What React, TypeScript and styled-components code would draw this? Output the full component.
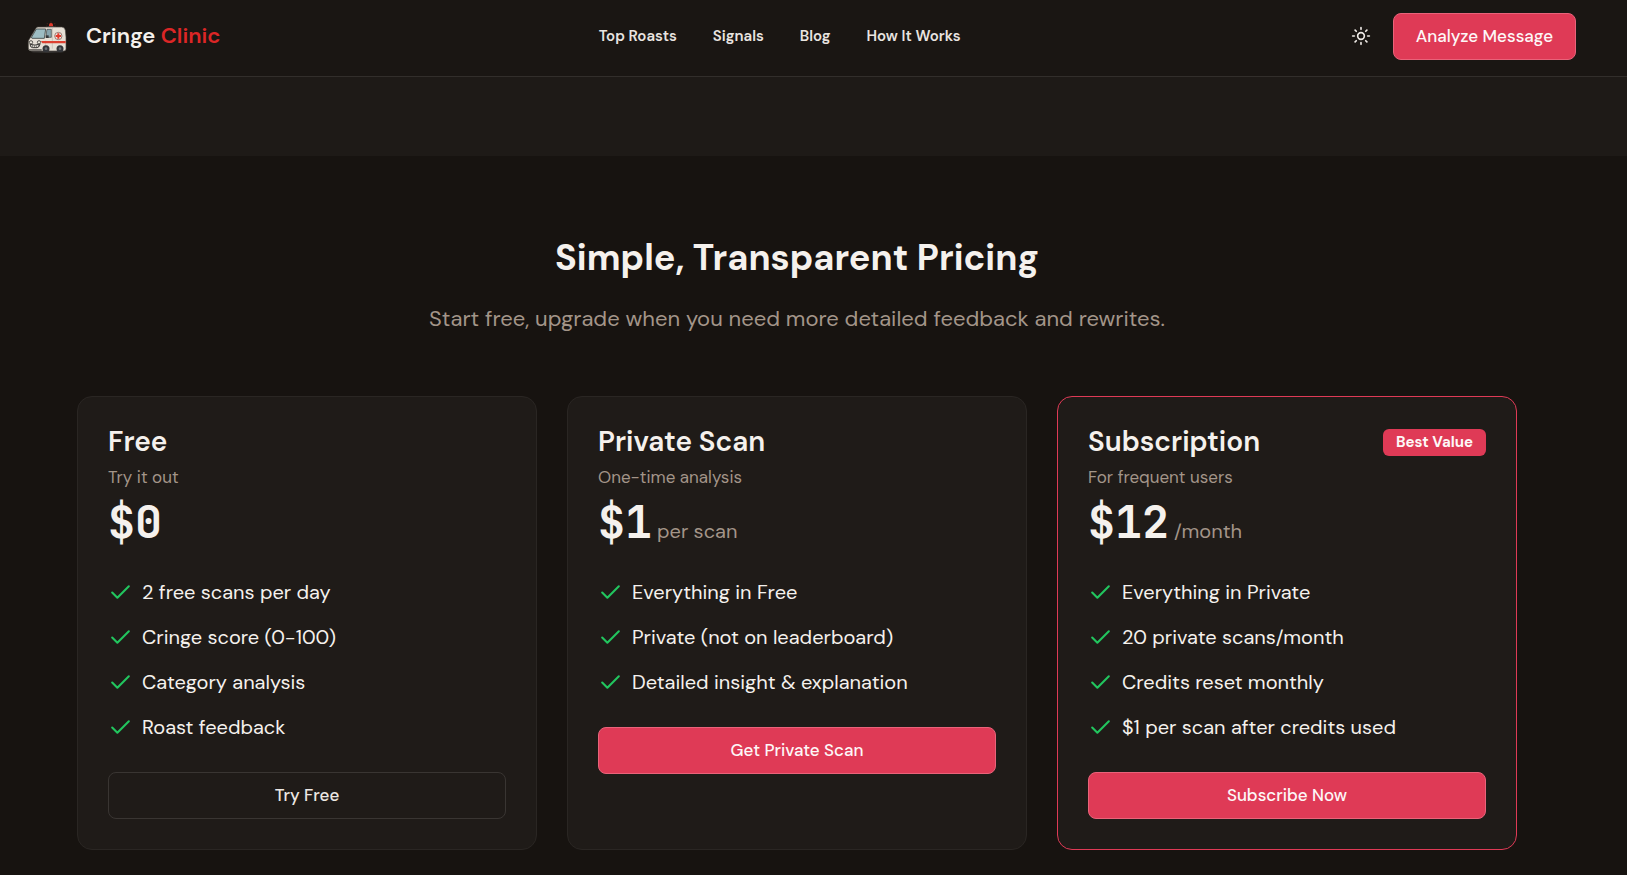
import React from "react";
import styled, { createGlobalStyle } from "styled-components";
import { Check, Sun } from "lucide-react";

const GlobalStyle = createGlobalStyle`
  *, *::before, *::after { box-sizing: border-box; }
  body {
    margin: 0;
    background: #171310;
    color: #f5f1ed;
    font-family: "DM Sans", "Open Sans", sans-serif;
    font-size: 20px;
    line-height: 30px;
  }
  h1, h2, h3, p, ul { margin: 0; padding: 0; }
  button { font: inherit; cursor: pointer; }
`;

const Header = styled.header`
  display: flex;
  align-items: center;
  justify-content: space-between;
  padding: 13px 51px 16px 27px;
  background: #1a1613;
  border-bottom: 1px solid #322e2b;
`;

const Brand = styled.a`
  display: flex;
  align-items: center;
  gap: 19px;
  padding-bottom: 1px;
  color: #f5f1ed;
  font-size: 22px;
  font-weight: 600;
  text-decoration: none;
`;

const BrandAccent = styled.span`
  color: #dc2626;
`;

const Nav = styled.nav`
  display: flex;
  gap: 36px;
  padding-bottom: 1px;
`;

const NavLink = styled.a`
  color: #e9e4e0;
  font-size: 15px;
  font-weight: 600;
  text-decoration: none;
`;

const Actions = styled.div`
  display: flex;
  align-items: center;
  gap: 10px;
`;

const IconButton = styled.button`
  display: grid;
  place-items: center;
  width: 44px;
  height: 44px;
  padding: 0 0 1px;
  border: 0;
  border-radius: 8px;
  background: transparent;
  color: #f0ebe7;
`;

const Button = styled.button<{ $outline?: boolean; $block?: boolean }>`
  width: ${(p) => (p.$block ? "100%" : "auto")};
  height: 47px;
  padding: 0 22px 2px;
  border: 1px solid ${(p) => (p.$outline ? "#393532" : "#e9637a")};
  border-radius: 8px;
  background: ${(p) => (p.$outline ? "transparent" : "#df3a56")};
  color: ${(p) => (p.$outline ? "#ece7e3" : "#fdf7f7")};
  font-size: 17px;
  font-weight: 500;
`;

const Band = styled.div`
  height: 79px;
  background: #1e1a17;
`;

const Pricing = styled.section`
  padding: 79px 33px 24px 0;
`;

const Container = styled.div`
  max-width: 1440px;
  margin: 0 auto;
`;

const Intro = styled.div`
  margin-bottom: 60px;
  text-align: center;
`;

const Title = styled.h2`
  margin-bottom: 21px;
  font-size: 36px;
  font-weight: 700;
  line-height: 46px;
`;

const Subtitle = styled.p`
  color: #a39589;
  font-size: 22px;
  line-height: 34px;
`;

const Plans = styled.div`
  display: grid;
  grid-template-columns: repeat(3, 1fr);
  gap: 30px;
`;

const Card = styled.article<{ $featured?: boolean }>`
  padding: 30px;
  border: 1px solid ${(p) => (p.$featured ? "#df3a56" : "#2a2623")};
  border-radius: 15px;
  background: #1f1b18;
`;

const CardHead = styled.div`
  display: flex;
  align-items: center;
  justify-content: space-between;
  height: 30px;
  margin-bottom: 8px;
`;

const PlanName = styled.h3`
  font-size: 28px;
  font-weight: 600;
  line-height: 30px;
`;

const Badge = styled.span`
  padding: 0 13px;
  border-radius: 6px;
  background: #df3a56;
  color: #fdf7f7;
  font-size: 15px;
  font-weight: 700;
  line-height: 27px;
`;

const Tagline = styled.p`
  margin-bottom: 7px;
  color: #a39589;
  font-size: 17px;
  line-height: 25px;
`;

const PriceRow = styled.p`
  display: flex;
  align-items: baseline;
  gap: 5px;
  margin-bottom: 30px;
`;

const Price = styled.span`
  font-family: "JetBrains Mono", "Liberation Mono", monospace;
  font-size: 45px;
  font-weight: 700;
  line-height: 50px;
`;

const Unit = styled.span`
  color: #a39589;
`;

const Features = styled.ul`
  display: grid;
  gap: 15px;
  margin-bottom: 30px;
  list-style: none;
`;

const Feature = styled.li`
  display: flex;
  align-items: center;
  gap: 9px;
`;

const Tick = styled(Check)`
  flex: none;
  color: #22c55e;
`;

function Ambulance() {
  return (
    <svg width="40" height="35" viewBox="0 -3 120 105" aria-hidden="true">
      <path d="M60 9l2 4M72 4v5M84 9l-2 4M57 18l4 1M87 18l-4 1" stroke="#5a2a24" strokeWidth="2" />
      <ellipse cx="62" cy="95" rx="50" ry="4" fill="#33312f" />
      <path d="M62 22v-3h20v3z" fill="#4a4a4a" />
      <path d="M66 19v-4a6 6 0 0 1 12 0v4z" fill="#e23a2c" />
      <path d="M28 23q2-2 6-2h70q9 0 11 10l2 20v36q0 6-6 6H14q-10 0-10-9V66q0-6 4-10z" fill="#e6e0d6" stroke="#4b4742" strokeWidth="2" />
      <path d="M28 27h28l-4 28H15q-2 0-1-4z" fill="#9dbdc3" stroke="#3d4444" strokeWidth="2.5" />
      <path d="M60 28h13v24H58q-1-14 2-24z" fill="#88a5ae" stroke="#3d4444" strokeWidth="2" />
      <path d="M76 24v62M56 62v24" stroke="#b0aaa0" strokeWidth="1.5" />
      <path d="M56 46h9v8h-9z" fill="#34383a" />
      <path d="M42 63h74v7H46z" fill="#dc4030" />
      <circle cx="94" cy="48" r="11" fill="#f0ebe2" stroke="#8b6560" strokeWidth="2.5" />
      <path d="M91 40h6v5h5v6h-5v5h-6v-5h-5v-6h5z" fill="#e23a2c" />
      <circle cx="12" cy="67" r="5" fill="#ece7dc" stroke="#3a3835" strokeWidth="2.5" />
      <circle cx="36" cy="67" r="5" fill="#ece7dc" stroke="#3a3835" strokeWidth="2.5" />
      <path d="M9 73q15 5 30-1-2 11-9 11H17q-7 0-8-10z" fill="#f0ece2" stroke="#3a3835" strokeWidth="3" />
      <path d="M16 75v7M22 76v7M28 76v7M34 74v7" stroke="#3a3835" strokeWidth="2" />
      <path d="M4 87h40v6H14q-7 0-10-6z" fill="#77736e" />
      <circle cx="57" cy="86" r="10.500" fill="#34363a" />
      <circle cx="57" cy="86" r="4" fill="#6b7176" />
      <circle cx="99" cy="86" r="10.500" fill="#34363a" />
      <circle cx="99" cy="86" r="4" fill="#6b7176" />
    </svg>
  );
}

const links = ["Top Roasts", "Signals", "Blog", "How It Works"];

interface Plan {
  name: string;
  tagline: string;
  price: string;
  unit?: string;
  badge?: string;
  features: string[];
  action: string;
  outline?: boolean;
}

const plans: Plan[] = [
  {
    name: "Free",
    tagline: "Try it out",
    price: "$0",
    features: ["2 free scans per day", "Cringe score (0-100)", "Category analysis", "Roast feedback"],
    action: "Try Free",
    outline: true,
  },
  {
    name: "Private Scan",
    tagline: "One-time analysis",
    price: "$1",
    unit: "per scan",
    features: ["Everything in Free", "Private (not on leaderboard)", "Detailed insight & explanation"],
    action: "Get Private Scan",
  },
  {
    name: "Subscription",
    tagline: "For frequent users",
    price: "$12",
    unit: "/month",
    badge: "Best Value",
    features: ["Everything in Private", "20 private scans/month", "Credits reset monthly", "$1 per scan after credits used"],
    action: "Subscribe Now",
  },
];

function PlanCard({ plan }: { plan: Plan }) {
  return (
    <Card $featured={Boolean(plan.badge)}>
      <CardHead>
        <PlanName>{plan.name}</PlanName>
        {plan.badge && <Badge>{plan.badge}</Badge>}
      </CardHead>
      <Tagline>{plan.tagline}</Tagline>
      <PriceRow>
        <Price>{plan.price}</Price>
        {plan.unit && <Unit>{plan.unit}</Unit>}
      </PriceRow>
      <Features>
        {plan.features.map((feature) => (
          <Feature key={feature}>
            <Tick size={25} />
            {feature}
          </Feature>
        ))}
      </Features>
      <Button type="button" $block $outline={plan.outline}>
        {plan.action}
      </Button>
    </Card>
  );
}

export default function App() {
  return (
    <>
      <GlobalStyle />
      <Header>
        <Brand href="#">
          <Ambulance />
          <span>
            Cringe <BrandAccent>Clinic</BrandAccent>
          </span>
        </Brand>
        <Nav>
          {links.map((link) => (
            <NavLink key={link} href="#">
              {link}
            </NavLink>
          ))}
        </Nav>
        <Actions>
          <IconButton type="button" aria-label="Toggle theme">
            <Sun size={20} />
          </IconButton>
          <Button type="button">Analyze Message</Button>
        </Actions>
      </Header>
      <main>
        <Band />
        <Pricing>
          <Container>
            <Intro>
              <Title>Simple, Transparent Pricing</Title>
              <Subtitle>Start free, upgrade when you need more detailed feedback and rewrites.</Subtitle>
            </Intro>
            <Plans>
              {plans.map((plan) => (
                <PlanCard key={plan.name} plan={plan} />
              ))}
            </Plans>
          </Container>
        </Pricing>
      </main>
    </>
  );
}
